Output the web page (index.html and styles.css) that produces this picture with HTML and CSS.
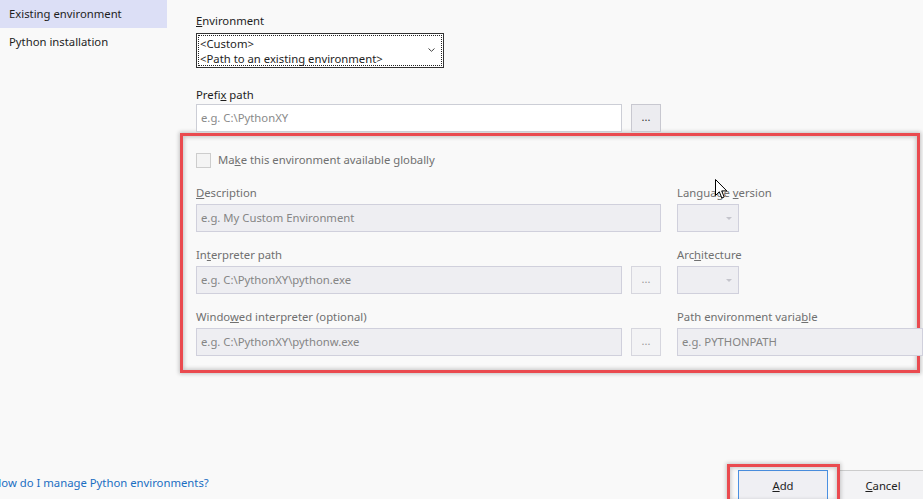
FILE: index.html
```html
<!DOCTYPE html>
<html>
<head>
<meta charset="utf-8">
<link rel="stylesheet" href="styles.css">
</head>
<body>
<div class="page">
  <div class="top">
    <nav class="sidebar">
      <div class="nav-item active">Existing environment</div>
      <div class="nav-item">Python installation</div>
    </nav>
    <main class="main">
      <div class="label"><u>E</u>nvironment</div>
      <div class="select">
        <div class="select-focus">
          <div class="select-text">
            <div>&lt;Custom&gt;</div>
            <div>&lt;Path to an existing environment&gt;</div>
          </div>
          <svg class="chev" width="7" height="4" viewBox="0 0 7 4"><path d="M0.5 0.5 L3.5 3.3 L6.5 0.5" fill="none" stroke="#444" stroke-width="1"/></svg>
        </div>
      </div>
      <div class="label prefix-label">Prefi<u>x</u> path</div>
      <div class="row">
        <div class="input prefix-input">e.g. C:\PythonXY</div>
        <div class="browse">...</div>
      </div>
      <section class="highlight">
        <div class="check-row">
          <span class="checkbox"></span>
          <span class="dim-label">Ma<u>k</u>e this environment available globally</span>
        </div>
        <div class="grid">
          <div class="dim-label cell-wide"><u>D</u>escription</div>
          <div class="dim-label right">Language <u>v</u>ersion</div>
          <div class="input disabled cell-wide">e.g. My Custom Environment</div>
          <div class="right"><div class="combo"><span class="tri"></span></div></div>

          <div class="dim-label cell-wide gap-top">In<u>t</u>erpreter path</div>
          <div class="dim-label right gap-top">Arc<u>h</u>itecture</div>
          <div class="input disabled">e.g. C:\PythonXY\python.exe</div>
          <div class="browse disabled-btn">...</div>
          <div class="right"><div class="combo"><span class="tri"></span></div></div>

          <div class="dim-label cell-wide gap-top">Windo<u>w</u>ed interpreter (optional)</div>
          <div class="dim-label right gap-top">Path environment varia<u>b</u>le</div>
          <div class="input disabled">e.g. C:\PythonXY\pythonw.exe</div>
          <div class="browse disabled-btn">...</div>
          <div class="right"><div class="input disabled path-env">e.g. PYTHONPATH</div></div>
        </div>
      </section>
    </main>
  </div>
  <footer class="footer">
    <a class="help-link">How do I manage Python environments?</a>
    <div class="buttons">
      <div class="btn-wrap">
        <button class="btn primary"><u>A</u>dd</button>
        <span class="btn-mark"></span>
      </div>
      <button class="btn"><u>C</u>ancel</button>
    </div>
  </footer>
  <svg class="cursor" width="13" height="21" viewBox="0 0 13 21"><path d="M0.5 0.5 L0.5 16.5 L4.3 12.8 L6.8 19 L9.2 18 L6.7 11.9 L11.8 11.9 Z" fill="#fff" stroke="#000" stroke-width="1"/></svg>
</div>
</body>
</html>
```

FILE: styles.css
```css
* { box-sizing: border-box; }
html, body { margin: 0; padding: 0; }
body {
  width: 923px;
  height: 499px;
  overflow: hidden;
  background: #f9f9f9;
  font-family: "Noto Sans", "Open Sans", sans-serif;
  font-size: 11.3px;
  color: #1e1e1e;
}
.page {
  position: relative;
  height: 499px;
  display: flex;
  flex-direction: column;
}
.top { display: flex; flex: 1; }
.sidebar { width: 167px; flex: none; }
.nav-item {
  height: 28px;
  line-height: 28px;
  padding-left: 9px;
  color: #1e1e1e;
}
.active { background: #dcdff6; }
.main {
  flex: 1;
  padding-left: 29px;
  padding-top: 13px;
}
.label {
  line-height: 16px;
  height: 16px;
  margin-bottom: 4px;
}
u { text-decoration: underline; text-underline-offset: 1px; }
.select {
  width: 248px;
  height: 35px;
  border: 1px solid #333;
  background: #fff;
  padding: 1px;
}
.select-focus {
  height: 100%;
  border: 1px dotted #222;
  display: flex;
  align-items: center;
  padding-left: 1px;
  padding-right: 6px;
}
.select-text { flex: 1; line-height: 15px; }
.chev { margin-top: -1px; }
.prefix-label { margin-top: 19px; margin-bottom: 1px; }
.row { display: flex; gap: 9px; }
.input {
  height: 28px;
  line-height: 26px;
  border: 1px solid #ccced6;
  background: #fff;
  padding-left: 4px;
  color: #8a8a8a;
  white-space: nowrap;
  overflow: hidden;
}
.prefix-input { width: 426px; }
.browse {
  width: 30px;
  height: 28px;
  border: 1px solid #c8c8d0;
  background: #ececf0;
  text-align: center;
  line-height: 24px;
  color: #333;
  font-size: 11px;
}
.highlight {
  margin-top: 1px;
  margin-left: -16px;
  margin-right: 3px;
  border: 3px solid #ea4a4f;
  box-shadow: inset 0 0 4px 1px rgba(0,0,0,0.22), 0 0 4px 1px rgba(0,0,0,0.22);
  padding: 16px 0 14px 13px;
  background: #f9f9f9;
}
.check-row {
  display: flex;
  align-items: center;
  height: 16px;
  gap: 7px;
}
.checkbox {
  width: 15px;
  height: 15px;
  border: 1px solid #cdcdcd;
  background: #f4f4f4;
}
.dim-label {
  color: #707070;
  line-height: 16px;
  height: 16px;
}
.grid {
  margin-top: 17px;
  display: grid;
  grid-template-columns: 426px 30px 1fr;
  column-gap: 9px;
}
.grid .dim-label { margin-bottom: 3px; }
.cell-wide { grid-column: 1 / 3; }
.gap-top { margin-top: 15px; }
.right { padding-left: 7px; }
.disabled {
  background: #eeeef2;
  border-color: #d0d0dc;
  color: #858585;
}
.disabled-btn {
  background: #f3f3f5;
  border-color: #d6d6de;
  color: #999;
}
.combo {
  width: 62px;
  height: 28px;
  border: 1px solid #d0d0dc;
  background: #eeeef2;
  position: relative;
}
.tri {
  position: absolute;
  right: 6px;
  top: 12px;
  border-left: 3px solid transparent;
  border-right: 3px solid transparent;
  border-top: 3px solid #c4c4cc;
}
.path-env { margin-right: -6px; }
.footer {
  height: 35px;
  display: flex;
  align-items: flex-start;
  justify-content: space-between;
  margin-right: -5px;
}
.help-link {
  color: #1a6ec2;
  margin-left: -7px;
  margin-top: 11px;
  line-height: 16px;
}
.buttons {
  display: flex;
  gap: 10px;
  padding-top: 6px;
}
.btn {
  width: 90px;
  height: 30px;
  font: inherit;
  color: #1e1e1e;
  background: #f3f3f5;
  border: 1px solid #cccccc;
  padding: 0;
}
.btn.primary { border-color: #4a90e2; background: #efeff3; }
.btn-wrap { position: relative; }
.btn-mark {
  position: absolute;
  left: -11px;
  top: -6px;
  width: 113px;
  height: 40px;
  border: 3px solid #ea4a4f;
  box-shadow: 0 0 4px 1px rgba(0,0,0,0.2), inset 0 0 4px 1px rgba(0,0,0,0.2);
}
.cursor {
  position: absolute;
  left: 715px;
  top: 179px;
}
```
